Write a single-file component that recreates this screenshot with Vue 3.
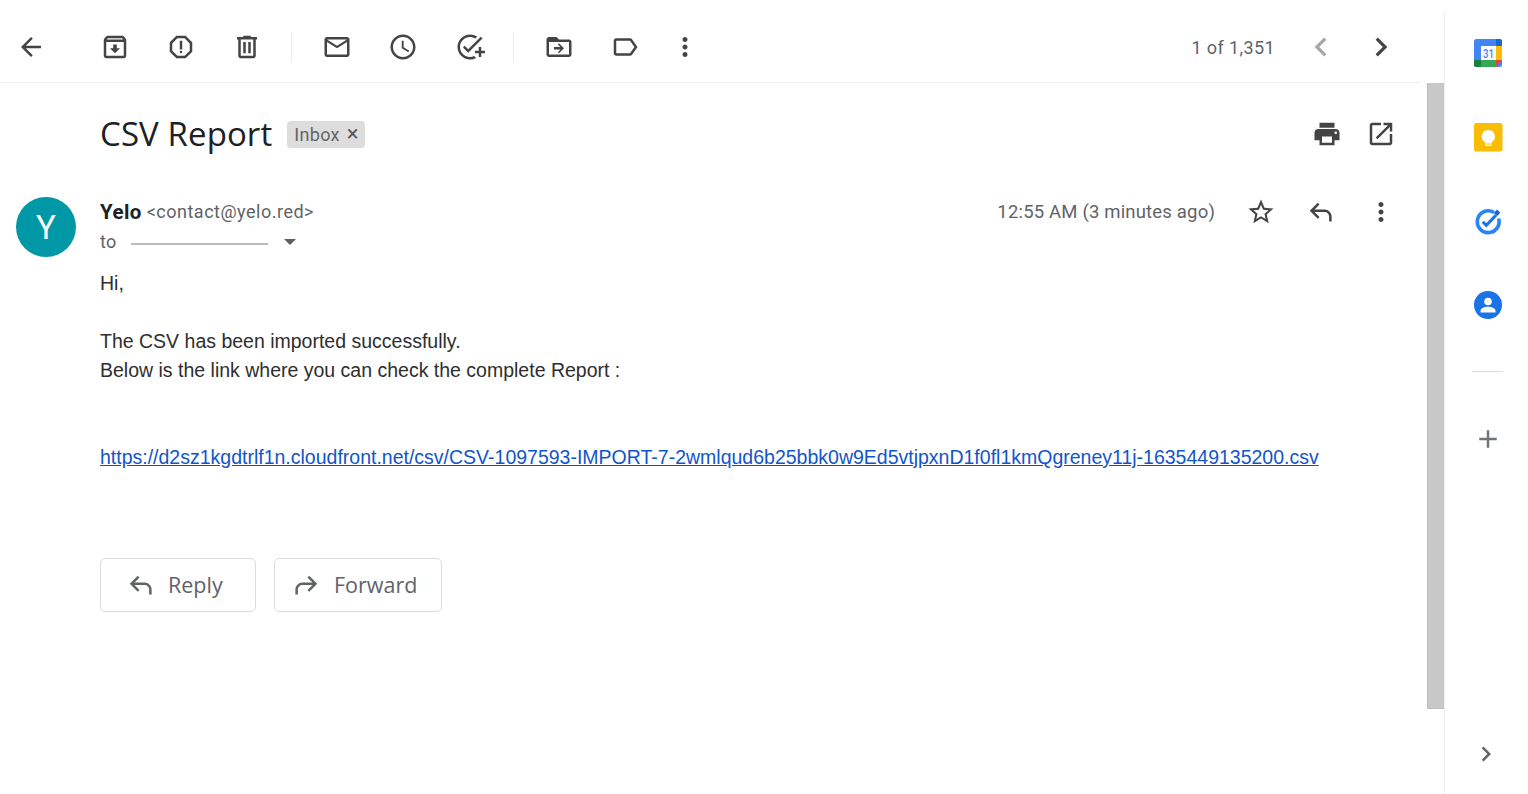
<script setup>
const icons = {
  back: 'M20 11H7.83l5.59-5.59L12 4l-8 8 8 8 1.41-1.41L7.83 13H20v-2z',
  archive: 'M20.54 5.23l-1.39-1.68C18.88 3.21 18.47 3 18 3H6c-.47 0-.88.21-1.16.55L3.46 5.23C3.17 5.57 3 6.02 3 6.5V19c0 1.1.9 2 2 2h14c1.1 0 2-.9 2-2V6.5c0-.48-.17-.93-.46-1.27zM6.24 5h11.52l.81.97H5.44l.8-.97zM5 19V8h14v11H5zm8.45-9h-2.9v3H8l4 4 4-4h-2.55z',
  report: 'M15.73 3H8.27L3 8.27v7.46L8.27 21h7.46L21 15.73V8.27L15.73 3zM19 14.9L14.9 19H9.1L5 14.9V9.1L9.1 5h5.8L19 9.1v5.8zM12 15a1 1 0 1 0 0 2 1 1 0 0 0 0-2zM11 7h2v7h-2z',
  trash: 'M15 4V3H9v1H4v2h1v13c0 1.1.9 2 2 2h10c1.1 0 2-.9 2-2V6h1V4h-5zm2 15H7V6h10v13zM9 8h2v9H9zm4 0h2v9h-2z',
  mail: 'M20 4H4c-1.1 0-2 .9-2 2v12c0 1.1.9 2 2 2h16c1.1 0 2-.9 2-2V6c0-1.1-.9-2-2-2zm0 14H4V8l8 5 8-5v10zm-8-7L4 6h16l-8 5z',
  clock: 'M11.99 2C6.47 2 2 6.48 2 12s4.47 10 9.99 10C17.52 22 22 17.52 22 12S17.52 2 11.99 2zM12 20c-4.42 0-8-3.58-8-8s3.58-8 8-8 8 3.58 8 8-3.58 8-8 8zm.5-13H11v6l5.25 3.15.75-1.23-4.5-2.67z',
  task: 'M22 5.18L10.59 16.6l-4.24-4.24 1.41-1.41 2.83 2.83 10-10L22 5.18zM12 20c-4.41 0-8-3.59-8-8s3.59-8 8-8c1.57 0 3.04.46 4.28 1.25l1.45-1.45C16.1 2.67 14.13 2 12 2 6.48 2 2 6.48 2 12s4.48 10 10 10c1.73 0 3.36-.44 4.78-1.22l-1.5-1.5C14.28 19.74 13.17 20 12 20zM19 15h-3v2h3v3h2v-3h3v-2h-3v-3h-2v3z',
  move: 'M20 6h-8l-2-2H4c-1.1 0-2 .9-2 2v12c0 1.1.9 2 2 2h16c1.1 0 2-.9 2-2V8c0-1.1-.9-2-2-2zm0 12H4V8h16v10zm-8-1l4-4-4-4-.9.9 2.1 2.1H8v2h5.2l-2.1 2.1.9.9z',
  label: 'M17.63 5.84C17.27 5.33 16.67 5 16 5L5 5.01C3.9 5.01 3 5.9 3 7v10c0 1.1.9 1.99 2 1.99L16 19c.67 0 1.27-.33 1.63-.84L22 12l-4.37-6.16zM16 17H5V7h11l3.55 5L16 17z',
  more: 'M12 8c1.1 0 2-.9 2-2s-.9-2-2-2-2 .9-2 2 .9 2 2 2zm0 2c-1.1 0-2 .9-2 2s.9 2 2 2 2-.9 2-2-.9-2-2-2zm0 6c-1.1 0-2 .9-2 2s.9 2 2 2 2-.9 2-2-.9-2-2-2z',
  left: 'M15.41 7.41L14 6l-6 6 6 6 1.41-1.41L10.83 12z',
  right: 'M10 6L8.59 7.41 13.17 12l-4.58 4.59L10 18l6-6z',
  print: 'M19 8H5c-1.66 0-3 1.34-3 3v6h4v4h12v-4h4v-6c0-1.66-1.34-3-3-3zm-3 11H8v-5h8v5zm3-7c-.55 0-1-.45-1-1s.45-1 1-1 1 .45 1 1-.45 1-1 1zm-1-9H6v4h12V3z',
  open: 'M19 19H5V5h7V3H5c-1.11 0-2 .9-2 2v14c0 1.1.89 2 2 2h14c1.1 0 2-.9 2-2v-7h-2v7zM14 3v2h3.59l-9.83 9.83 1.41 1.41L19 6.41V10h2V3h-7z',
  star: 'M22 9.24l-7.19-.62L12 2 9.19 8.63 2 9.24l5.46 4.73L5.82 21 12 17.27 18.18 21l-1.63-7.03L22 9.24zM12 15.4l-3.76 2.27 1-4.28-3.32-2.88 4.38-.38L12 6.1l1.71 4.04 4.38.38-3.32 2.88 1 4.28L12 15.4z',
  reply: 'M20.5 19.5h-2v-3.7c0-2.1-1.6-3.8-3.7-3.8H6.8l4 4-1.4 1.4-6.4-6.4 6.4-6.4 1.4 1.4-4 4h8c3.2 0 5.7 2.6 5.7 5.8v3.7z',
  forward: 'M3.5 19.5h2v-3.7c0-2.1 1.6-3.8 3.7-3.8h8l-4 4 1.4 1.4 6.4-6.4-6.4-6.4-1.4 1.4 4 4h-8c-3.2 0-5.7 2.6-5.7 5.8v3.7z',
}
const group1 = ['archive', 'report', 'trash']
const group2 = ['mail', 'clock', 'task']
const group3 = ['move', 'label']
</script>

<template>
  <div class="page">
    <main class="main">
      <header class="toolbar">
        <button class="tool back"><svg viewBox="0 0 24 24"><path :d="icons.back" /></svg></button>
        <div class="group">
          <button v-for="n in group1" :key="n" class="tool"><svg viewBox="0 0 24 24"><path :d="icons[n]" /></svg></button>
        </div>
        <span class="divider first"></span>
        <div class="group second">
          <button v-for="n in group2" :key="n" class="tool"><svg viewBox="0 0 24 24"><path :d="icons[n]" fill-rule="evenodd" /></svg></button>
        </div>
        <span class="divider"></span>
        <div class="group">
          <button v-for="n in group3" :key="n" class="tool"><svg viewBox="0 0 24 24"><path :d="icons[n]" fill-rule="evenodd" /></svg></button>
        </div>
        <button class="tool"><svg viewBox="0 0 24 24"><path :d="icons.more" /></svg></button>
        <div class="pager">
          <span class="count">1 of 1,351</span>
          <button class="tool faded"><svg viewBox="0 0 24 24"><path :d="icons.left" /></svg></button>
          <button class="tool"><svg viewBox="0 0 24 24"><path :d="icons.right" /></svg></button>
        </div>
      </header>

      <div class="scroller">
        <article class="message">
          <div class="subject-row">
            <h1 class="subject">CSV Report</h1>
            <span class="chip">Inbox<span class="chip-x">×</span></span>
            <div class="subject-actions">
              <button class="tool"><svg viewBox="0 0 24 24"><path :d="icons.print" /></svg></button>
              <button class="tool"><svg viewBox="0 0 24 24"><path :d="icons.open" /></svg></button>
            </div>
          </div>

          <div class="mail-row">
            <div class="avatar">Y</div>
            <div class="mail-col">
              <div class="meta-row">
                <div class="from"><strong>Yelo</strong> <span>&lt;contact@yelo.red&gt;</span></div>
                <span class="time">12:55 AM (3 minutes ago)</span>
                <button class="tool"><svg viewBox="0 0 24 24"><path :d="icons.star" /></svg></button>
                <button class="tool"><svg viewBox="0 0 24 24"><path :d="icons.reply" /></svg></button>
                <button class="tool"><svg viewBox="0 0 24 24"><path :d="icons.more" /></svg></button>
              </div>
              <div class="to-row">
                <span>to</span>
                <span class="redacted"></span>
                <span class="caret"></span>
              </div>
              <div class="body">
                Hi,<br /><br />
                The CSV has been imported successfully.<br />
                Below is the link where you can check the complete Report :<br /><br /><br />
                <a href="#">https://d2sz1kgdtrlf1n.cloudfront.net/csv/CSV-1097593-IMPORT-7-2wmlqud6b25bbk0w9Ed5vtjpxnD1f0fl1kmQgreney11j-1635449135200.csv</a>
              </div>
              <div class="actions">
                <button class="action reply"><svg viewBox="0 0 24 24"><path :d="icons.reply" /></svg>Reply</button>
                <button class="action forward"><svg viewBox="0 0 24 24"><path :d="icons.forward" /></svg>Forward</button>
              </div>
            </div>
          </div>
        </article>
        <div class="scrollbar"><div class="thumb"></div></div>
      </div>
    </main>

    <aside class="side">
      <div class="side-app">
        <svg class="logo" viewBox="0 0 28 28">
          <defs><clipPath id="cal-clip"><rect width="28" height="28" rx="2.500" /></clipPath></defs>
          <g clip-path="url(#cal-clip)">
            <rect x="0" y="0" width="28" height="28" fill="#4285f4" />
            <rect x="22" y="0" width="6" height="7" fill="#1967d2" />
            <rect x="22" y="7" width="6" height="14" fill="#fbbc04" />
            <rect x="7" y="21" width="15" height="7" fill="#34a853" />
            <rect x="0" y="21" width="7" height="7" fill="#188038" />
            <path d="M22 21h6l-6 7z" fill="#ea4335" />
            <rect x="7" y="7" width="15" height="14" fill="#fff" />
          </g>
          <text x="14.500" y="19" class="cal-text" textLength="11" lengthAdjust="spacingAndGlyphs">31</text>
        </svg>
      </div>
      <div class="side-app">
        <svg class="logo" viewBox="0 0 28 28">
          <rect x="0" y="0" width="28.500" height="28.500" rx="2.500" fill="#fbbc04" />
          <path d="M14.300 7a6.500 6.500 0 0 0-3.500 12v1.500h7V19a6.500 6.500 0 0 0-3.500-12z" fill="#fff" />
          <rect x="11" y="21.500" width="6.600" height="1.500" fill="#fff" />
        </svg>
      </div>
      <div class="side-app">
        <svg class="logo" viewBox="0 0 28 28">
          <path d="M20 5.500A10.900 10.900 0 1 0 24.600 11.500" fill="none" stroke="#2684fc" stroke-width="3.600" />
          <path d="M8.700 14.800l3.600 3.600 9.500-10" fill="none" stroke="#1a73e8" stroke-width="3" />
          <path d="M19.800 6l3.300-3.400 3.200 3.100-3.400 3.500z" fill="#1a66d2" />
        </svg>
      </div>
      <div class="side-app">
        <svg class="logo" viewBox="0 0 28 28">
          <circle cx="14" cy="14" r="14" fill="#1a73e8" />
          <circle cx="14" cy="10.500" r="3.800" fill="#fff" />
          <path d="M6.500 20c0-3 4.500-4.300 7.500-4.300s7.500 1.300 7.500 4.300v1.500h-15z" fill="#fff" />
        </svg>
      </div>
      <div class="side-rule"></div>
      <svg class="plus" viewBox="0 0 24 24"><path d="M19 13h-6v6h-2v-6H5v-2h6V5h2v6h6v2z" /></svg>
      <svg class="expand" viewBox="0 0 24 24"><path :d="icons.right" /></svg>
    </aside>
  </div>
</template>

<style scoped>
.page {
  display: flex;
  width: 1528px;
  height: 794px;
  overflow: hidden;
  background: #fff;
  font-family: Roboto, "Liberation Sans", sans-serif;
  color: #5f6368;
}
.main {
  width: 1444px;
  display: flex;
  flex-direction: column;
  flex: none;
}
.toolbar {
  display: flex;
  align-items: center;
  box-sizing: border-box;
  width: 1420px;
  height: 83px;
  padding: 12px 9px 0 1px;
  border-bottom: 1px solid #eceff1;
}
.tool {
  width: 60px;
  height: 60px;
  flex: none;
  padding: 0;
  border: 0;
  background: none;
  display: flex;
  align-items: center;
  justify-content: center;
}
.tool svg {
  width: 30px;
  height: 30px;
  fill: #444;
}
.back { margin-right: 24px; }
.faded svg { fill: #a6a6a6; }
.group { display: flex; gap: 6px; }
.second .tool:last-child { margin-left: 1px; }
.divider {
  width: 1px;
  height: 30px;
  margin: 0 15.500px 0 12.500px;
  background: #e8eaed;
}
.divider.first { margin: 0 15px 0 14px; }
.pager {
  margin-left: auto;
  display: flex;
  align-items: center;
}
.pager .tool svg { width: 38px; height: 38px; }
.count {
  margin-right: 16px;
  font-size: 18px;
  letter-spacing: .4px;
}
.scroller {
  flex: 1;
  display: flex;
  min-height: 0;
}
.message { flex: 1; min-width: 0; }
.scrollbar { width: 17px; flex: none; }
.thumb {
  height: 626px;
  background: #c8c8c8;
  box-shadow: inset 1px 0 #bebebe, inset 0 -1px #bebebe;
}
.subject-row {
  display: flex;
  align-items: center;
  height: 102px;
  padding: 0 16px 0 100px;
}
.subject {
  margin: -2px 0 0;
  font-family: "Open Sans", sans-serif;
  font-size: 33px;
  font-weight: 400;
  letter-spacing: .1px;
  color: #202124;
}
.chip {
  margin-left: 15px;
  height: 27px;
  padding: 0 6px 0 7px;
  display: flex;
  align-items: center;
  background: #ddd;
  border-radius: 4px;
  font-size: 18px;
  color: #666;
  letter-spacing: .3px;
}
.chip-x { margin-left: 7px; font-size: 22px; color: #555; line-height: 1; }
.subject-actions { margin-left: auto; display: flex; }
.subject-actions .tool:first-child { margin-right: -6px; }
.mail-row {
  display: flex;
  padding: 12px 16px 0;
}
.avatar {
  width: 60px;
  height: 60px;
  flex: none;
  border-radius: 50%;
  background: #0097a7;
  color: #fff;
  font-size: 33px;
  display: flex;
  align-items: center;
  justify-content: center;
}
.mail-col {
  margin-left: 24px;
  flex: 1;
  min-width: 0;
}
.meta-row {
  display: flex;
  align-items: center;
  height: 30px;
}
.meta-row .tool { margin: -15px 0; }
.from {
  flex: 1;
  font-size: 18px;
  letter-spacing: .5px;
}
.from span { vertical-align: 1px; }
.from strong { font-size: 20.500px; letter-spacing: .4px; color: #202124; font-weight: 700; }
.time {
  margin-right: 16px;
  font-size: 18.500px;
  letter-spacing: .18px;
}
.to-row {
  display: flex;
  align-items: center;
  height: 30px;
  font-size: 18px;
  letter-spacing: .3px;
}
.to-row > span:first-child { margin-top: -2px; }
.redacted {
  width: 137px;
  height: 2px;
  margin: 3px 16px 0 14px;
  background: #bbb;
}
.caret {
  width: 0;
  height: 0;
  border: 6.500px solid transparent;
  border-top: 6px solid #5f5f5f;
  border-bottom: 0;
}
.body {
  margin-top: 12px;
  font-family: "Liberation Sans", Arial, sans-serif;
  font-size: 19.500px;
  line-height: 29px;
  color: #2e2e2e;
}
.body a { color: #15c; }
.actions {
  display: flex;
  gap: 18px;
  margin-top: 86px;
}
.action {
  box-sizing: border-box;
  height: 54px;
  display: flex;
  align-items: center;
  background: #fff;
  border: 1px solid #dadce0;
  border-radius: 5px;
  padding: 0 0 2px;
  font-family: "Open Sans", Roboto, sans-serif;
  font-size: 21.500px;
  font-weight: 500;
  color: #5f6368;
}
.action svg { width: 30px; height: 30px; fill: #5f6368; margin: 2px 12px 0 0; }
.reply { width: 156px; padding-left: 25px; }
.forward { width: 168px; padding-left: 16px; }
.forward svg { margin-right: 13px; }
.side {
  position: relative;
  box-sizing: border-box;
  width: 84px;
  margin-top: 12px;
  border-left: 1px solid #eee;
  display: flex;
  flex-direction: column;
  align-items: center;
  gap: 2px;
  flex: none;
}
.side-app {
  height: 82px;
  flex: none;
  display: flex;
  align-items: center;
  justify-content: center;
  margin-left: 3px;
}
.logo { width: 28px; height: 28px; overflow: visible; }
.cal-text {
  font-family: Roboto, sans-serif;
  font-size: 13.500px;
  font-weight: 500;
  fill: #4285f4;
  text-anchor: middle;
}
.side-rule {
  width: 31px;
  height: 1px;
  margin: 23px 0 0 1px;
  background: #dadce0;
}
.plus { width: 30px; height: 30px; fill: #70757a; margin: 50px 0 0 3px; }
.expand {
  width: 30px;
  height: 30px;
  fill: #5f6368;
  position: absolute;
  left: 26px;
  top: 727px;
}
</style>
